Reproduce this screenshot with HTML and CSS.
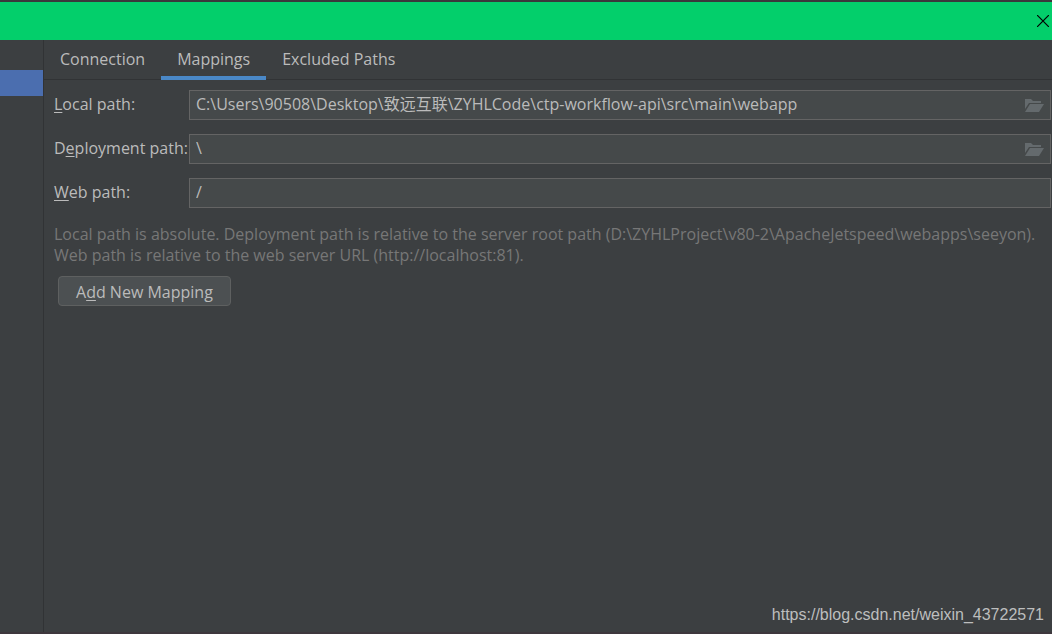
FILE: index.html
```html
<!DOCTYPE html>
<html lang="en">
<head>
<meta charset="utf-8">
<title>Deployment</title>
<link rel="stylesheet" href="styles.css">
</head>
<body>
<div class="window">
  <header class="titlebar">
    <button class="close" type="button" aria-label="Close">
      <svg width="12" height="12" viewBox="0 0 12 12" aria-hidden="true"><path d="M0 0L12 12M12 0L0 12" stroke="#000" stroke-width="1.2"/></svg>
    </button>
  </header>
  <div class="body">
    <aside class="sidebar"><div class="selected"></div></aside>
    <main class="content">
      <nav class="tabs" role="tablist">
        <button class="tab" type="button" role="tab" aria-selected="false">Connection</button>
        <button class="tab active" type="button" role="tab" aria-selected="true">Mappings</button>
        <button class="tab" type="button" role="tab" aria-selected="false">Excluded Paths</button>
      </nav>
      <form class="form">
        <label for="local"><u>L</u>ocal path:</label>
        <div class="field">
          <input id="local" type="text" value="C:\Users\90508\Desktop\致远互联\ZYHLCode\ctp-workflow-api\src\main\webapp">
          <button class="browse" type="button" aria-label="Browse local path">
            <svg width="20" height="16" viewBox="0 0 20 16" aria-hidden="true"><path d="M1 2H7L9 4H17V6H5L1 12Z M6 7H20L15 15H1Z" fill="#646a6d"/></svg>
          </button>
        </div>
        <label for="deploy">D<u>e</u>ployment path:</label>
        <div class="field">
          <input id="deploy" type="text" value="\">
          <button class="browse" type="button" aria-label="Browse deployment path">
            <svg width="20" height="16" viewBox="0 0 20 16" aria-hidden="true"><path d="M1 2H7L9 4H17V6H5L1 12Z M6 7H20L15 15H1Z" fill="#646a6d"/></svg>
          </button>
        </div>
        <label for="web"><u>W</u>eb path:</label>
        <div class="field"><input id="web" type="text" value="/"></div>
      </form>
      <p class="hint">Local path is absolute. Deployment path is relative to the server root path (D:\ZYHLProject\v80-2\ApacheJetspeed\webapps\seeyon).<br>Web path is relative to the web server URL (http://localhost:81).</p>
      <button class="add" type="button">A<u>d</u>d New Mapping</button>
      <footer class="watermark">https://blog.csdn.net/weixin_43722571</footer>
    </main>
  </div>
</div>
</body>
</html>
```
FILE: styles.css
```css
* {
  box-sizing: border-box;
}

body {
  margin: 0;
  background: #3c3f41;
  color: #bbbbbb;
  font: 16px/22px "Open Sans", "Noto Sans CJK SC", sans-serif;
}

button,
input {
  margin: 0;
  padding: 0;
  border: 0;
  background: none;
  color: inherit;
  font: inherit;
}

u {
  text-decoration-thickness: 1px;
  text-underline-offset: 2px;
}

.window {
  display: flex;
  flex-direction: column;
  min-height: 100vh;
  border-top: 2px solid #3a383c;
  border-bottom: 2px solid #3e373d;
}

.titlebar {
  display: flex;
  align-items: center;
  justify-content: flex-end;
  height: 38px;
  padding-right: 3px;
  background: #03cf6b;
}

.close {
  display: flex;
}

.body {
  display: flex;
  flex: 1;
}

.sidebar {
  width: 44px;
  padding-top: 30px;
  border-right: 1px solid #313335;
}

.selected {
  height: 26px;
  background: #4b6eaf;
}

.content {
  display: flex;
  flex: 1;
  flex-direction: column;
  align-items: flex-start;
  min-width: 0;
}

.tabs {
  display: flex;
  align-self: stretch;
  height: 40px;
  border-bottom: 1px solid #313335;
}

.tab {
  height: 40px;
  padding: 2px 16px 0;
  border-bottom: 4px solid transparent;
}

.active {
  border-bottom-color: #4a88c7;
}

.form {
  display: grid;
  grid-template-columns: 131px 1fr;
  column-gap: 4px;
  row-gap: 14px;
  align-items: center;
  align-self: stretch;
  padding: 10px 1px 0 10px;
}

label {
  padding-bottom: 2px;
  white-space: nowrap;
}

.field {
  display: flex;
  align-items: center;
  height: 30px;
  padding: 0 6px;
  border: 1px solid #646464;
  background: #45494a;
}

.field input {
  flex: 1;
  min-width: 0;
  padding-bottom: 2px;
  outline: 0;
}

.browse {
  display: flex;
}

.hint {
  margin: 16px 0 10px 10px;
  color: #777777;
  line-height: 21px;
}

.add {
  height: 30px;
  margin-left: 14px;
  padding: 2px 17px 0;
  border: 1px solid #5e6060;
  border-radius: 4px;
  background: #4c5052;
}

.watermark {
  align-self: flex-end;
  margin-top: auto;
  padding: 0 8px 6px 0;
  color: #bdbebe;
  font: 16px/22px "Liberation Sans", sans-serif;
}
```
